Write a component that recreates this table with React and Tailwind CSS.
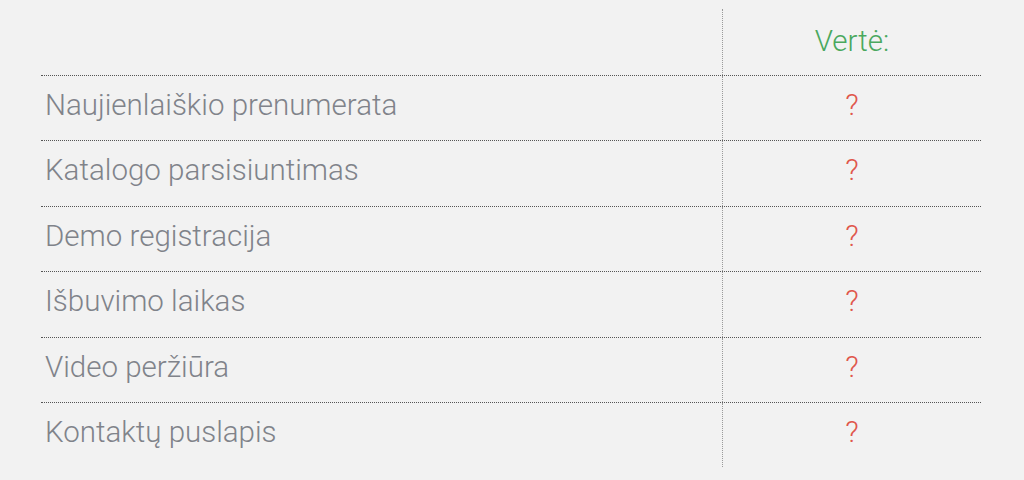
const rows = [
  'Naujienlaiškio prenumerata',
  'Katalogo parsisiuntimas',
  'Demo registracija',
  'Išbuvimo laikas',
  'Video peržiūra',
  'Kontaktų puslapis',
];

export default function App() {
  return (
    <div
      className="w-[1024px] h-[480px] bg-[#f2f2f2] pt-[9px] pl-[41px] overflow-hidden"
      style={{ fontFamily: 'Roboto, "Liberation Sans", sans-serif' }}
    >
      <div className="w-[940px] font-light text-[29.5px]">
        {/* header */}
        <div className="flex h-[66px]">
          <div className="w-[681px]" />
          <div className="flex-1 flex items-center justify-center border-l border-dotted border-[#9a9a9a] text-[#4aa85e] pb-[2px]">
            Vertė:
          </div>
        </div>

        {rows.map((label) => (
          <div key={label} className="flex h-[65.4px] border-t border-dotted border-[#555]">
            <div className="w-[681px] flex items-center pl-[4px] text-[#80838a] pb-[6px]">
              {label}
            </div>
            <div className="flex-1 flex items-center justify-center border-l border-dotted border-[#9a9a9a] text-[#e0574c] pb-[6px]">
              ?
            </div>
          </div>
        ))}
      </div>
    </div>
  );
}
